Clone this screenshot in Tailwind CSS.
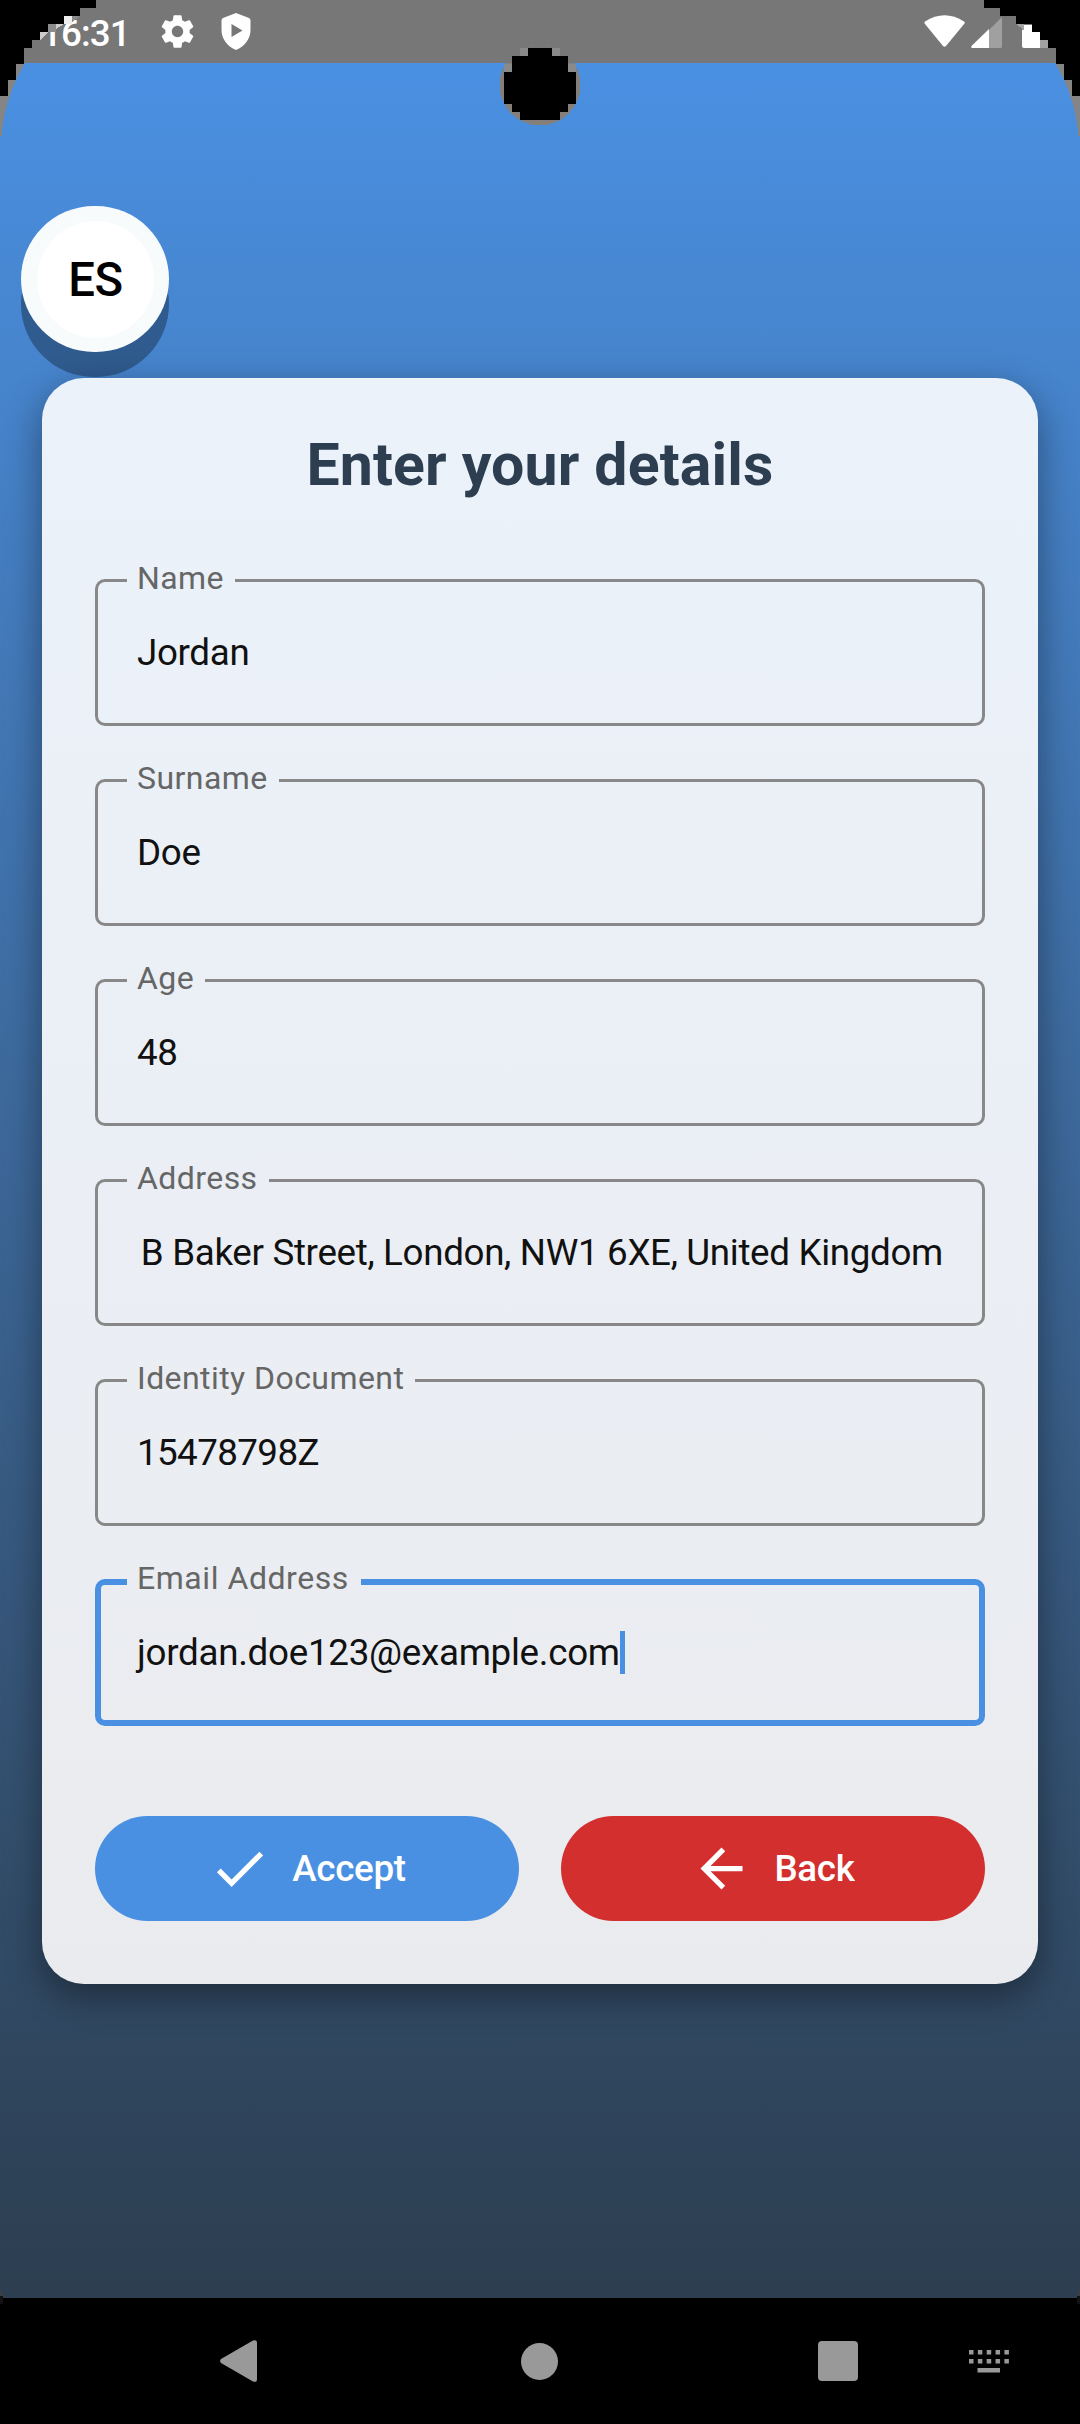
<!DOCTYPE html>
<html lang="en">
<head>
<meta charset="utf-8">
<title>Enter your details</title>
<script src="https://cdn.jsdelivr.net/npm/@tailwindcss/browser@4"></script>
</head>
<body class="relative flex h-[2424px] w-[1080px] flex-col overflow-hidden bg-black font-['Roboto',sans-serif]">

<!-- Status bar -->
<header class="flex h-[63px] shrink-0 items-center justify-between bg-[#777777] pl-[41px] pr-[40px] text-white">
  <div class="flex items-center">
    <span class="mt-[3px] w-[110px] text-[36.75px] leading-[43px] font-medium tracking-[-0.9px]">16:31</span>
    <svg class="ml-[7px] size-[39px]" viewBox="0 0 24 24" fill="currentColor"><path d="M19.43 12.98c.04-.32.07-.64.07-.98s-.03-.66-.07-.98l2.11-1.65c.19-.15.24-.42.12-.64l-2-3.46c-.12-.22-.39-.3-.61-.22l-2.49 1c-.52-.4-1.08-.73-1.69-.98l-.38-2.65C14.46 2.18 14.25 2 14 2h-4c-.25 0-.46.18-.49.42l-.38 2.65c-.61.25-1.17.59-1.69.98l-2.49-1c-.23-.09-.49 0-.61.22l-2 3.46c-.13.22-.07.49.12.64l2.11 1.65c-.04.32-.07.65-.07.98s.03.66.07.98l-2.11 1.65c-.19.15-.24.42-.12.64l2 3.46c.12.22.39.3.61.22l2.49-1c.52.4 1.08.73 1.69.98l.38 2.65c.03.24.24.42.49.42h4c.25 0 .46-.18.49-.42l.38-2.65c.61-.25 1.17-.59 1.69-.98l2.49 1c.23.09.49 0 .61-.22l2-3.46c.12-.22.07-.49-.12-.64l-2.11-1.65zM12 15.5c-1.93 0-3.5-1.57-3.5-3.5s1.57-3.5 3.5-3.5 3.5 1.57 3.5 3.5-1.57 3.5-3.5 3.5z"/></svg>
    <svg class="ml-[24px] h-[37px] w-[30px]" viewBox="0 0 30 37" fill="currentColor" fill-rule="evenodd"><path d="M15 0 L28 5 Q29.500 5.600 29.500 7.500 V17 C29.500 26 23.500 33.500 15 37 C6.500 33.500 .5 26 .5 17 V7.500 Q.5 5.600 2 5 Z M10.500 11 V24 L21.500 17.500 Z"/></svg>
  </div>
  <div class="flex items-center">
    <svg class="h-[34px] w-[116px]" viewBox="924 14 116 34"><path fill="#fff" d="M925 20.500 Q944.500 8 964 20.500 Q965.300 21.500 964.300 22.800 L946 45 Q944.500 46.600 943 45 L924.800 22.800 Q923.900 21.500 925 20.500Z"/><path fill="#a0a0a0" d="M989 29 L1002 16 V45.500 Q1002 47 1000.500 47 H989Z"/><path fill="#fff" d="M989 28 V47 H972 Q970.500 46.500 971.500 45Z"/><path fill="#fff" d="M1022 29 L1024 28 V24 H1040 V47 H1024 Q1022 47 1022 45Z"/></svg>
  </div>
</header>

<main class="flex h-[2235px] shrink-0 flex-col bg-linear-to-b from-[#4a90e2] to-[#2c3e50] px-[42px] pt-[143px]">
  <!-- Language button -->
  <button class="-ml-[21px] flex h-[146px] w-[148px] shrink-0 items-center justify-center rounded-full bg-[#f8fbfc] shadow-[0_25px_0_0_#2f5b8e]">
    <span class="flex size-[117px] items-center justify-center rounded-full bg-white pt-[4px] pl-px text-[47.25px] leading-none font-medium tracking-[-0.5px] text-black">ES</span>
  </button>

  <!-- Details card -->
  <form class="mt-[26px] flex h-[1606px] shrink-0 flex-col rounded-[42px] bg-linear-to-b from-[#ebf2fa] via-[#ebeff5] to-[#eaebee] px-[53px] shadow-[0_12px_36px_0_rgba(0,0,0,0.4)]">
    <h1 class="mt-[53px] text-center text-[59px] leading-[68px] font-bold tracking-[0.15px] text-[#2c3e50]">Enter your details</h1>

    <div class="mt-[63px] flex flex-col gap-[36px] text-[36.75px] tracking-[-0.33px] text-[#111]">
      <fieldset class="h-[164px] min-w-0 rounded-[10px] border-[3px] border-[#888] pl-[29px]">
        <legend class="pr-[11px] pb-[5px] pl-[10px] text-[32px] leading-[32px] tracking-[0.43px] text-[#666]">Name</legend>
        <div class="pt-[32px] pl-[10px] leading-[43px]">Jordan</div>
      </fieldset>
      <fieldset class="h-[164px] min-w-0 rounded-[10px] border-[3px] border-[#888] pl-[29px]">
        <legend class="pr-[11px] pb-[5px] pl-[10px] text-[32px] leading-[32px] tracking-[0.43px] text-[#666]">Surname</legend>
        <div class="pt-[32px] pl-[10px] leading-[43px]">Doe</div>
      </fieldset>
      <fieldset class="h-[164px] min-w-0 rounded-[10px] border-[3px] border-[#888] pl-[29px]">
        <legend class="pr-[11px] pb-[5px] pl-[10px] text-[32px] leading-[32px] tracking-[0.43px] text-[#666]">Age</legend>
        <div class="pt-[32px] pl-[10px] leading-[43px]">48</div>
      </fieldset>
      <fieldset class="h-[164px] min-w-0 rounded-[10px] border-[3px] border-[#888] pl-[29px]">
        <legend class="pr-[11px] pb-[5px] pl-[10px] text-[32px] leading-[32px] tracking-[0.43px] text-[#666]">Address</legend>
        <div class="pt-[32px] pr-[39px] text-right leading-[43px] whitespace-nowrap">B Baker Street, London, NW1 6XE, United Kingdom</div>
      </fieldset>
      <fieldset class="h-[164px] min-w-0 rounded-[10px] border-[3px] border-[#888] pl-[29px]">
        <legend class="pr-[11px] pb-[5px] pl-[10px] text-[32px] leading-[32px] tracking-[0.43px] text-[#666]">Identity Document</legend>
        <div class="pt-[32px] pl-[10px] leading-[43px] tracking-[-0.6px]">15478798Z</div>
      </fieldset>
      <fieldset class="h-[164px] min-w-0 rounded-[10px] border-[6px] border-[#4a90e2] pl-[26px]">
        <legend class="pr-[12px] pb-[8px] pl-[10px] text-[32px] leading-[32px] tracking-[0.55px] text-[#666]">Email Address</legend>
        <div class="flex items-center pt-[29px] pl-[10px] leading-[43px] tracking-[-0.28px]"><span>jordan.doe123@example.com</span><span class="h-[43px] w-[5px] bg-[#4a90e2]"></span></div>
      </fieldset>
    </div>

    <div class="mt-[90px] grid grid-cols-2 gap-[42px] text-[36.75px] font-medium tracking-[-0.3px] text-white">
      <button type="button" class="flex h-[105px] items-center justify-center gap-[21px] rounded-full bg-[#4a90e2]">
        <svg class="size-[63px]" viewBox="0 0 24 24" fill="currentColor"><path d="M9 16.170 4.830 12l-1.420 1.410L9 19 21 7l-1.410-1.410z"/></svg>
        <span>Accept</span>
      </button>
      <button type="button" class="flex h-[105px] items-center justify-center gap-[21px] rounded-full bg-[#d32f2f] pr-px">
        <svg class="size-[63px]" viewBox="0 0 24 24" fill="currentColor"><path d="M20 11H7.830l5.590-5.590L12 4l-8 8 8 8 1.410-1.410L7.830 13H20v-2z"/></svg>
        <span>Back</span>
      </button>
    </div>
  </form>
</main>

<!-- Navigation bar -->
<nav class="flex h-[126px] shrink-0 items-center bg-black pl-[220px] text-[#999]">
  <svg class="h-[42px] w-[38px]" viewBox="0 0 38 42" fill="currentColor"><path d="M1 19 L33 .6 Q37 -1 37 3 V39 Q37 43 33 41.400 L1 23 Q-.8 21 1 19Z"/></svg>
  <span class="ml-[263px] size-[37px] rounded-full bg-[#999]"></span>
  <span class="ml-[260px] size-[40px] rounded-[4px] bg-[#999]"></span>
  <svg class="ml-[111px] mt-px h-[23px] w-[40px]" viewBox="0 0 40 23" fill="currentColor"><path d="M0 0h4.500v4.500H0zM8.850 0h4.500v4.500h-4.500zM17.700 0h4.500v4.500h-4.500zM26.550 0h4.500v4.500h-4.500zM35.400 0h4.500v4.500h-4.500zM0 9h4.500v4.500H0zM8.850 9h4.500v4.500h-4.500zM17.700 9h4.500v4.500h-4.500zM26.550 9h4.500v4.500h-4.500zM35.400 9h4.500v4.500h-4.500zM8.500 18h22.500v4.500H8.500z"/></svg>
</nav>

<!-- Rounded display corners and camera cutout -->
<svg class="pointer-events-none absolute top-0 left-0 h-[140px] w-[1080px]" viewBox="0 0 1080 140" shape-rendering="crispEdges">
  <path fill="#858585" d="M0 63 H25 Q5 96 1.500 136 H0Z M1080 63 H1055 Q1075 96 1078.500 136 H1080Z"/>
  <path fill="#777" d="M40 24h10v16l-8 8H36z"/>
  <path fill="#eee" d="M64 16h8v8h-8z"/>
  <path fill="#8c8c8c" d="M72 16h8l-8 6zM48 24h8v8h-8z"/>
  <path fill="#ccc" d="M40 32h8l-8 8zM56 32v-3l8-5h-8z"/>
  <path fill="#a3a3a3" d="M1040 40h8v8h-8zM1016 24h8v6z"/>
  <path d="M0 0H96V8H80V16H64V24H48V32H40V40H32V48H24V64H16V80H8V96H0Z M1080 0H984V8H1000V16H1016V24H1032V32H1040V40H1048V48H1056V64H1064V80H1072V96H1080Z"/>
  <circle cx="540" cy="85" r="40.500" fill="#857f7c"/>
  <path fill="#777" d="M505 63 Q518 45 540 45 Q562 45 575 63Z"/>
  <path fill="#8a8a8a" d="M520 48h8v8h-8zM552 48h8v8h-8zM504 64h8v8h-8zM568 64h8v8h-8z"/>
  <path d="M528 48H552V56H568V72H576V104H568V112H560V120H520V112H512V104H504V72H512V56H528Z"/>
</svg>
<svg class="pointer-events-none absolute top-[2286px] left-0 h-[20px] w-[1080px]" viewBox="0 0 1080 20"><path fill="#3f3f3f" d="M0 2 L3 12H0zM1080 2 L1077 12H1080z"/><path fill="#111" d="M0 10h3v8H0zM1077 10h3v8h-3z"/></svg>
</body>
</html>
